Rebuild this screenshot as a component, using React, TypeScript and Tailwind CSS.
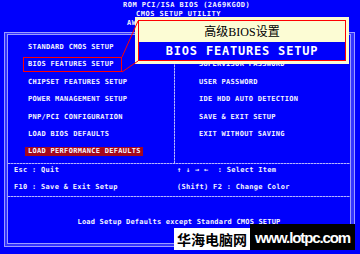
const LEFT = [
  "STANDARD CMOS SETUP",
  "BIOS FEATURES SETUP",
  "CHIPSET FEATURES SETUP",
  "POWER MANAGEMENT SETUP",
  "PNP/PCI CONFIGURATION",
  "LOAD BIOS DEFAULTS",
  "LOAD PERFORMANCE DEFAULTS",
];

const RIGHT = [
  "INTEGRATED PERIPHERALS",
  "SUPERVISOR PASSWORD",
  "USER PASSWORD",
  "IDE HDD AUTO DETECTION",
  "SAVE & EXIT SETUP",
  "EXIT WITHOUT SAVING",
];

function HDivider() {
  return (
    <div className="h-[1px] shrink-0 [background:repeating-linear-gradient(90deg,#b4b4ff_0px,#b4b4ff_2px,#6060ff_2px,#6060ff_3px)]" />
  );
}

export default function App() {
  return (
    <div className="relative w-[360px] h-[254px] overflow-hidden bg-[#0000fc] text-[#f4f4ff] [font-family:'DejaVu_Sans_Mono',monospace]">
      {/* header */}
      <div className="pt-[1px] text-[7px] font-bold leading-[9px] tracking-[0.5px] whitespace-pre">
        <div className="pl-[123px]">ROM PCI/ISA BIOS (2A69KGOD)</div>
        <div className="pl-[136px]">CMOS SETUP UTILITY</div>
        <div className="pl-[127px]">AWARD SOFTWARE, INC.</div>
      </div>

      {/* frame */}
      <div className="mt-[4px] ml-[4px] w-[351px] h-[215px] border border-[#9c9cff] bg-[#3434ff] pt-[1px] pl-[2px] pr-[3px] pb-[2px]">
        <div className="h-full border border-[#9c9cff] bg-[#0000fc] flex flex-col">
          {/* menu */}
          <div className="h-[128px] shrink-0 flex text-[7px] font-bold tracking-[0.3px] whitespace-pre">
            <div className="w-[166px] pt-[3px] pl-[20px] flex flex-col">
              {LEFT.map((t, i) => (
                <div key={t} className="h-[17.5px] flex items-center">
                  {i === LEFT.length - 1 ? (
                    <span className="-ml-[3px] px-[3px] pr-[2px] h-[9px] leading-[9px] bg-[#a4081c]">{t}</span>
                  ) : (
                    <span>{t}</span>
                  )}
                </div>
              ))}
            </div>
            <div className="w-[1px] [background:repeating-linear-gradient(180deg,#b4b4ff_0px,#b4b4ff_2px,#6060ff_2px,#6060ff_3px)]" />
            <div className="flex-1 pt-[3px] pl-[24px] flex flex-col">
              {RIGHT.map((t, i) => (
                <div key={t} className="h-[17.5px] flex items-center">
                  <span className={i === 0 ? "invisible" : ""}>{t}</span>
                </div>
              ))}
            </div>
          </div>

          <HDivider />

          {/* help */}
          <div className="h-[32px] shrink-0 flex flex-col gap-[5px] text-[7px] font-bold tracking-[0.3px] whitespace-pre">
            <div className="h-[12px] flex items-center">
              <div className="w-[169px] pl-[6px]">Esc : Quit</div>
              <div>↑ ↓ → ←  : Select Item</div>
            </div>
            <div className="h-[12px] flex items-center">
              <div className="w-[169px] pl-[6px]">F10 : Save &amp; Exit Setup</div>
              <div>(Shift) F2 : Change Color</div>
            </div>
          </div>

          <HDivider />

          {/* status */}
          <div className="flex-1 flex items-center justify-center pt-[4px] text-[7px] font-bold tracking-[0.2px] whitespace-pre">
            Load Setup Defaults except Standard CMOS SETUP
          </div>
        </div>
      </div>

      {/* callout popup */}
      <div className="absolute left-[135px] top-[17px] w-[214px] h-[47px] bg-[#fcfcd4] p-[3px]">
        <div className="h-full border border-[#ff0000] flex flex-col">
          <div className="h-[21px] shrink-0 flex items-center justify-center text-black text-[12px] leading-none [font-family:'Liberation_Serif','Noto_Sans_CJK_SC',serif]">
            高级BIOS设置
          </div>
          <div className="flex-1 bg-[#0000fc] flex items-center justify-center text-white font-bold text-[12px] leading-none tracking-[0.8px]">
            BIOS FEATURES SETUP
          </div>
        </div>
      </div>

      {/* annotation lines */}
      <svg className="absolute left-0 top-0 pointer-events-none" width="360" height="254">
        <rect x="23.5" y="57.5" width="98" height="14" fill="none" stroke="#ff0000" strokeWidth="1" />
        <line x1="122" y1="57" x2="138" y2="21" stroke="#ff0000" strokeWidth="1" />
        <line x1="122" y1="72" x2="138" y2="61" stroke="#ff0000" strokeWidth="1" />
      </svg>

      {/* watermark */}
      <div className="absolute left-[174px] top-[224px] flex items-end">
        <div className="w-[76px] h-[22px] bg-white flex items-center justify-center text-black font-bold text-[14px] leading-none [font-family:'Noto_Sans_CJK_SC',sans-serif]">
          华海电脑网
        </div>
        <div className="w-[105px] h-[26px] bg-black flex items-center justify-center text-white font-bold text-[15px] leading-none tracking-[-1.1px] [font-family:'Liberation_Sans',Arial,sans-serif]">
          www.lotpc.com
        </div>
      </div>
    </div>
  );
}
